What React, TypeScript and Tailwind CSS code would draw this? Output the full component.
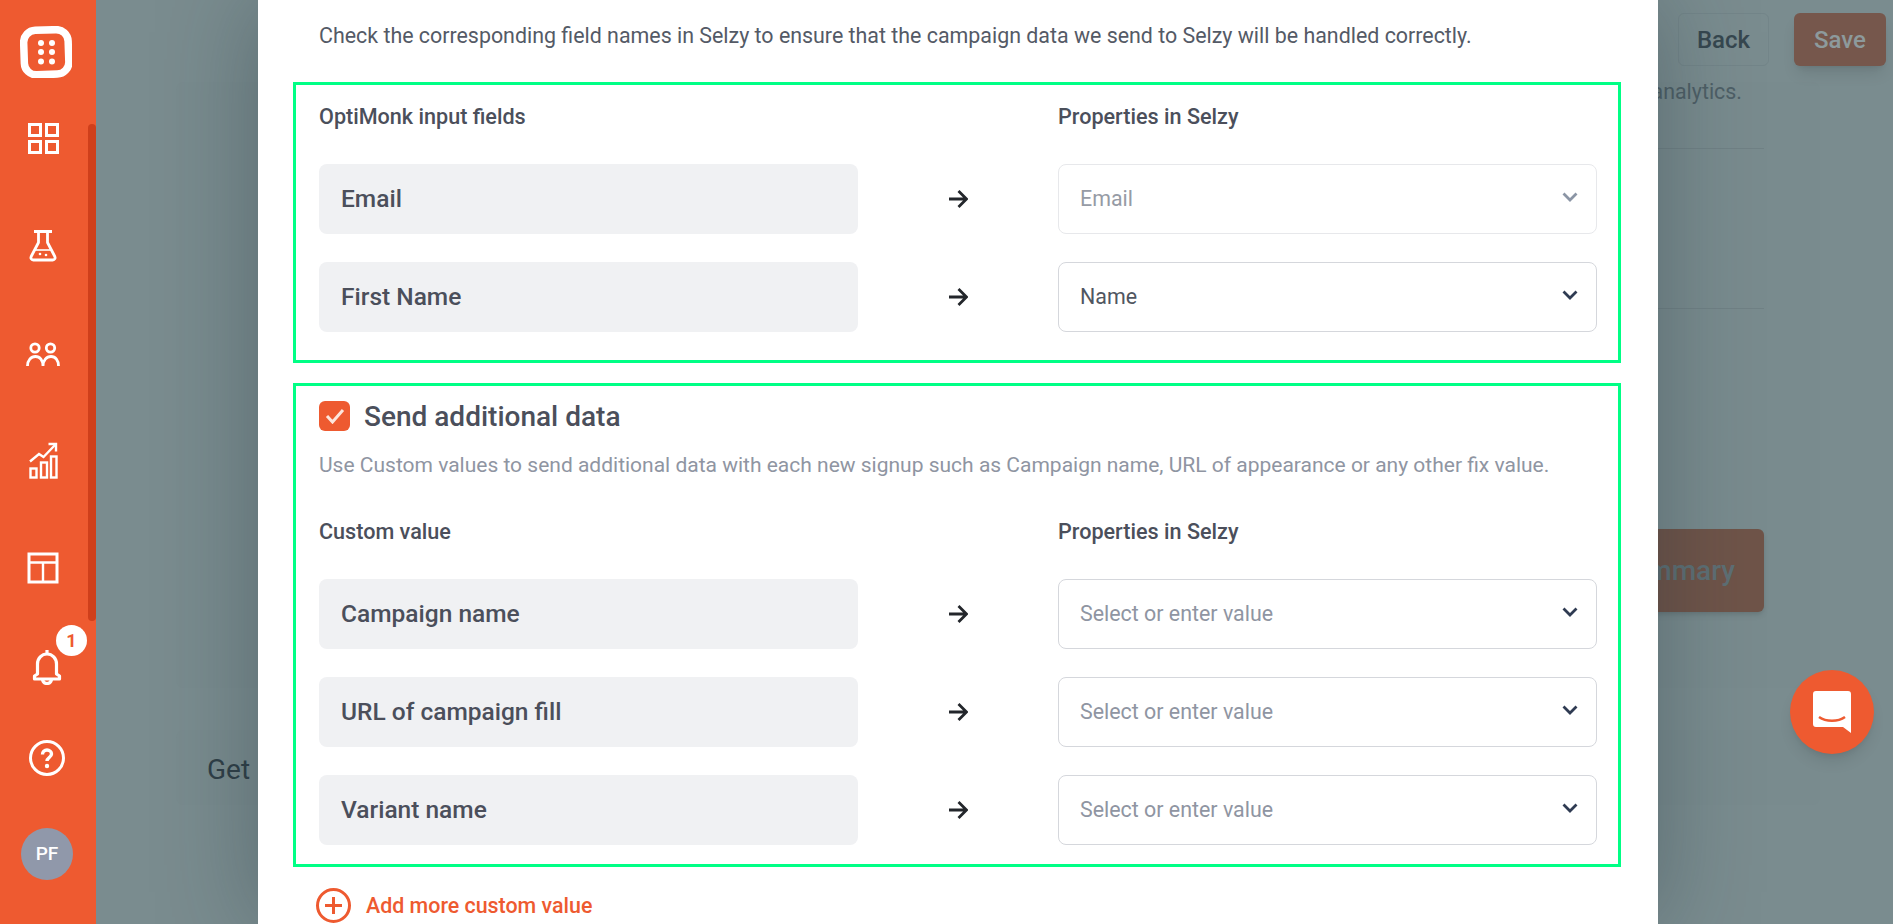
import React from "react";

function Chevron({ muted }: { muted?: boolean }) {
  return (
    <svg width="16" height="10" viewBox="0 0 16 10" fill="none" className={muted ? "text-[#8b95a5]" : "text-[#2f3b52]"}>
      <path d="M1.5 1.5 8 8l6.5-6.5" stroke="currentColor" strokeWidth="2.8" />
    </svg>
  );
}

function Arrow() {
  return (
    <svg width="20" height="20" viewBox="0 0 20 20" fill="none" className="text-[#23262b]">
      <path d="M1 10h17M10.5 2l8 8-8 8" stroke="currentColor" strokeWidth="2.8" />
    </svg>
  );
}

function Row({ label, value, placeholder, disabled }: { label: string; value: string; placeholder?: boolean; disabled?: boolean }) {
  return (
    <div className="flex items-center">
      <div className="flex h-[70px] w-[539px] items-center rounded-lg bg-[#f0f1f3] pl-[22px] text-[24.5px] font-medium text-[#4b4f5b]">
        <span>{label}</span>
      </div>
      <div className="flex flex-1 justify-center">
        <Arrow />
      </div>
      <div className={`flex h-[70px] w-[539px] items-center justify-between rounded-lg border pl-[21px] pr-[18px] text-[21.4px] ${disabled ? "border-[#e7e8eb]" : "border-[#d5d7dc]"}`}>
        <span className={disabled ? "text-[#969ba5]" : placeholder ? "text-[#8f95a2]" : "text-[#505661]"}>{value}</span>
        <span className="-mt-[4px]"><Chevron muted={disabled} /></span>
      </div>
    </div>
  );
}

function Sidebar() {
  return (
    <div className="relative z-20 flex h-full w-24 shrink-0 flex-col items-center bg-[#ee5a30] text-white">
      <div className="absolute right-0 top-[124px] h-[497px] w-2 rounded-t-md rounded-b-md bg-[#cf3f1b]" />
      <div className="flex w-full flex-col pl-[21px]">
        <svg width="52" height="52" viewBox="0 0 52 52" fill="none" className="mt-[26px] -ml-px">
          <rect x="4" y="4" width="44.5" height="44.5" rx="12" stroke="white" strokeWidth="7.5" transform="rotate(-2 26 26)" />
          <g fill="white">
            <circle cx="21" cy="17" r="3" />
            <circle cx="32" cy="17" r="3" />
            <circle cx="21" cy="26" r="3" />
            <circle cx="32" cy="26" r="3" />
            <circle cx="21" cy="35.500" r="3" />
            <circle cx="32" cy="35.500" r="3" />
          </g>
        </svg>
        <svg width="32" height="32" viewBox="0 0 32 32" fill="none" stroke="white" strokeWidth="3" className="mt-[44px] ml-[6px]">
          <rect x="2.500" y="2.500" width="11" height="11" />
          <rect x="19.500" y="2.500" width="11" height="11" />
          <rect x="2.500" y="19.500" width="11" height="11" />
          <rect x="19.500" y="19.500" width="11" height="11" />
        </svg>
        <svg width="30" height="32" viewBox="0 0 30 32" fill="none" stroke="white" strokeWidth="2.800" strokeLinejoin="round" className="mt-[76px] ml-[7px]">
          <path d="M6 1.500h18M10.500 1.500v11L3.200 26.500c-.8 1.800.2 3.500 2 3.500h19.600c1.800 0 2.800-1.700 2-3.500L19.500 12.500v-11" />
          <path d="M6 20h18" strokeWidth="1.600" />
          <circle cx="12" cy="24" r="1.300" fill="white" stroke="none" />
          <circle cx="18" cy="25" r="1.300" fill="white" stroke="none" />
        </svg>
        <svg width="34" height="26" viewBox="0 0 34 26" fill="none" stroke="white" strokeWidth="2.800" className="mt-[80px] ml-[5px]">
          <circle cx="9" cy="6" r="4.200" />
          <circle cx="24.500" cy="6" r="4.200" />
          <path d="M1.500 24c0-5.500 3.500-9.500 8-9.500s7.500 4 7.500 9.500c0-5.500 3.500-9.500 8-9.500s7.500 4 7.500 9.500" />
        </svg>
        <svg width="30" height="37" viewBox="0 0 30 37" fill="none" stroke="white" strokeWidth="2.400" className="mt-[74px] ml-[7px]">
          <path d="M2 19.500l9-7.500 4.500 3L27 3" />
          <path d="M20.500 2H28v7.500" />
          <rect x="2.500" y="26.500" width="6" height="9" />
          <rect x="13" y="20.500" width="6" height="15" />
          <rect x="23" y="14.500" width="5.500" height="21" />
        </svg>
        <svg width="32" height="32" viewBox="0 0 32 32" fill="none" stroke="white" strokeWidth="3" className="mt-[73px] ml-[6px]">
          <rect x="2" y="2" width="28" height="28" />
          <path d="M2 10.500h28M16 10.500V30" strokeWidth="2.400" />
        </svg>
        <div className="mt-[65px] ml-[11px] h-[36px] w-[30px]">
          <svg width="30" height="36" viewBox="0 0 30 36" fill="none" stroke="white" strokeWidth="3.200" strokeLinejoin="round">
            <path d="M15 1v3M5.500 25V15a9.500 10 0 0 1 19 0v10l3 2v3H2.500v-3z" />
            <path d="M10.500 30.500c.5 3 2.500 4 4.500 4s4-1 4.500-4" />
          </svg>
        </div>
        <svg width="36" height="36" viewBox="0 0 36 36" fill="none" stroke="white" className="mt-[55px] ml-[8px]">
          <circle cx="18" cy="18" r="16.500" strokeWidth="3" />
          <path d="M13.500 14.500c0-2.500 2-4.500 4.500-4.500s4.500 1.800 4.500 4c0 3.500-4.500 3.500-4.500 7" strokeWidth="3.400" />
          <circle cx="18" cy="26" r="2.200" fill="white" stroke="none" />
        </svg>
        <div className="mt-[52px] flex h-[52px] w-[52px] items-center justify-center rounded-full bg-[#9098aa] text-[19px] font-medium">PF</div>
      </div>
      <div className="absolute left-[56px] top-[625px] flex h-[31px] w-[31px] items-center justify-center rounded-full bg-white text-lg font-bold text-[#ee5a30]">1</div>
    </div>
  );
}

function Backdrop() {
  return (
    <div className="relative flex-1 bg-[#7a8c8f]">
      <div className="flex h-full flex-col pr-[73px] pl-[80px] pt-[82px]">
        <div className="flex h-[606px] flex-col items-end rounded-lg bg-[#798b8e] pr-[56px]">
          <div className="h-[66px] w-[500px]" />
          <div className="h-[1px] w-[500px] bg-[#708185]" />
          <div className="h-[159px] w-[500px]" />
          <div className="h-[1px] w-[500px] bg-[#708185]" />
          <div className="mt-[220px] flex h-[83px] w-[300px] items-center justify-end rounded-md bg-[#6f5449] pr-[29px] text-[28px] font-medium text-[#5e6f74] shadow-md">Summary</div>
        </div>
        <div className="mt-[42px] flex h-[75px] items-center rounded-lg bg-[#798b8e] pl-[31px] pt-[4px] text-[28px] text-[#2f3f47]">Get</div>
      </div>
      <div className="absolute right-[151px] top-[76px] text-[21.4px] text-[#4e5f66]">analytics.</div>
      <div className="absolute right-[7px] top-[13px] flex gap-[25px] text-2xl font-medium">
        <div className="flex h-[53px] w-[91px] items-center justify-center rounded-md border border-[#738589] text-[#36474f]">Back</div>
        <div className="flex h-[53px] w-[92px] items-center justify-center rounded-md bg-[#76574c] text-[#8d9a9c] shadow-lg">Save</div>
      </div>
    </div>
  );
}

export default function App() {
  return (
    <div className="relative flex h-[924px] w-full overflow-hidden font-['Roboto',sans-serif]">
      <Sidebar />
      <Backdrop />
      <div className="absolute left-[258px] top-0 z-10 h-[924px] w-[1400px] bg-white pl-[35px] shadow-[0_0_90px_rgba(30,45,55,0.35)]">
        <div className="flex h-[82px] w-[1328px] items-start pl-[26px] pt-[23px] text-[21.4px] leading-[26px] text-[#545a66]">
          Check the corresponding field names in Selzy to ensure that the campaign data we send to Selzy will be handled correctly.
        </div>
        <div className="w-[1328px] border-[3px] border-[#00ff85] pb-[28px] pl-[23px] pr-[21px] pt-[21px]">
          <div className="mb-[36px] flex h-[22px] items-center text-[21.6px] font-medium leading-[22px] text-[#4b4f5b]">
            <span className="w-[739px]">OptiMonk input fields</span>
            <span>Properties in Selzy</span>
          </div>
          <div className="flex flex-col gap-[28px]">
            <Row label="Email" value="Email" disabled />
            <Row label="First Name" value="Name" />
          </div>
        </div>
        <div className="mt-[20px] w-[1328px] border-[3px] border-[#00ff85] pb-[19px] pl-[23px] pr-[21px] pt-[15px]">
          <div className="flex h-[30px] items-center gap-[14px]">
            <div className="flex h-[30px] w-[31px] items-center justify-center rounded-md bg-[#ee5a30]">
              <svg width="20" height="16" viewBox="0 0 20 16" fill="none">
                <path d="M2 8l5.500 6L18 2" stroke="#fde5dc" strokeWidth="3" />
              </svg>
            </div>
            <span className="mt-[2px] text-[28px] font-medium leading-[30px] text-[#4b4f5b]">Send additional data</span>
          </div>
          <p className="mt-[22px] h-[24px] text-[21px] leading-[24px] text-[#8f95a2]">
            Use Custom values to send additional data with each new signup such as Campaign name, URL of appearance or any other fix value.
          </p>
          <div className="mb-[36px] mt-[44px] flex h-[22px] items-center text-[21.6px] font-medium leading-[22px] text-[#4b4f5b]">
            <span className="w-[739px]">Custom value</span>
            <span>Properties in Selzy</span>
          </div>
          <div className="flex flex-col gap-[28px]">
            <Row label="Campaign name" value="Select or enter value" placeholder />
            <Row label="URL of campaign fill" value="Select or enter value" placeholder />
            <Row label="Variant name" value="Select or enter value" placeholder />
          </div>
        </div>
        <div className="ml-[23px] mt-[21px] flex h-[35px] items-center gap-[15px]">
          <svg width="35" height="35" viewBox="0 0 35 35" fill="none" stroke="#ee5a30">
            <circle cx="17.500" cy="17.500" r="16" strokeWidth="3" />
            <path d="M17.500 9v17M9 17.500h17" strokeWidth="3" />
          </svg>
          <span className="mt-[2px] text-[21.4px] font-medium text-[#ee5a30]">Add more custom value</span>
        </div>
      </div>
      <div className="absolute left-[1790px] top-[670px] z-30 flex h-[84px] w-[84px] items-center justify-center rounded-full bg-[#ee5a30] shadow-lg">
        <svg width="38" height="42" viewBox="0 0 38 42" fill="none">
          <path d="M3 0h32a3 3 0 0 1 3 3v39l-8-6H3a3 3 0 0 1-3-3V3a3 3 0 0 1 3-3z" fill="white" />
          <path d="M6 26c7 5 19 5 26 0" stroke="#ee5a30" strokeWidth="2.500" />
        </svg>
      </div>
    </div>
  );
}
